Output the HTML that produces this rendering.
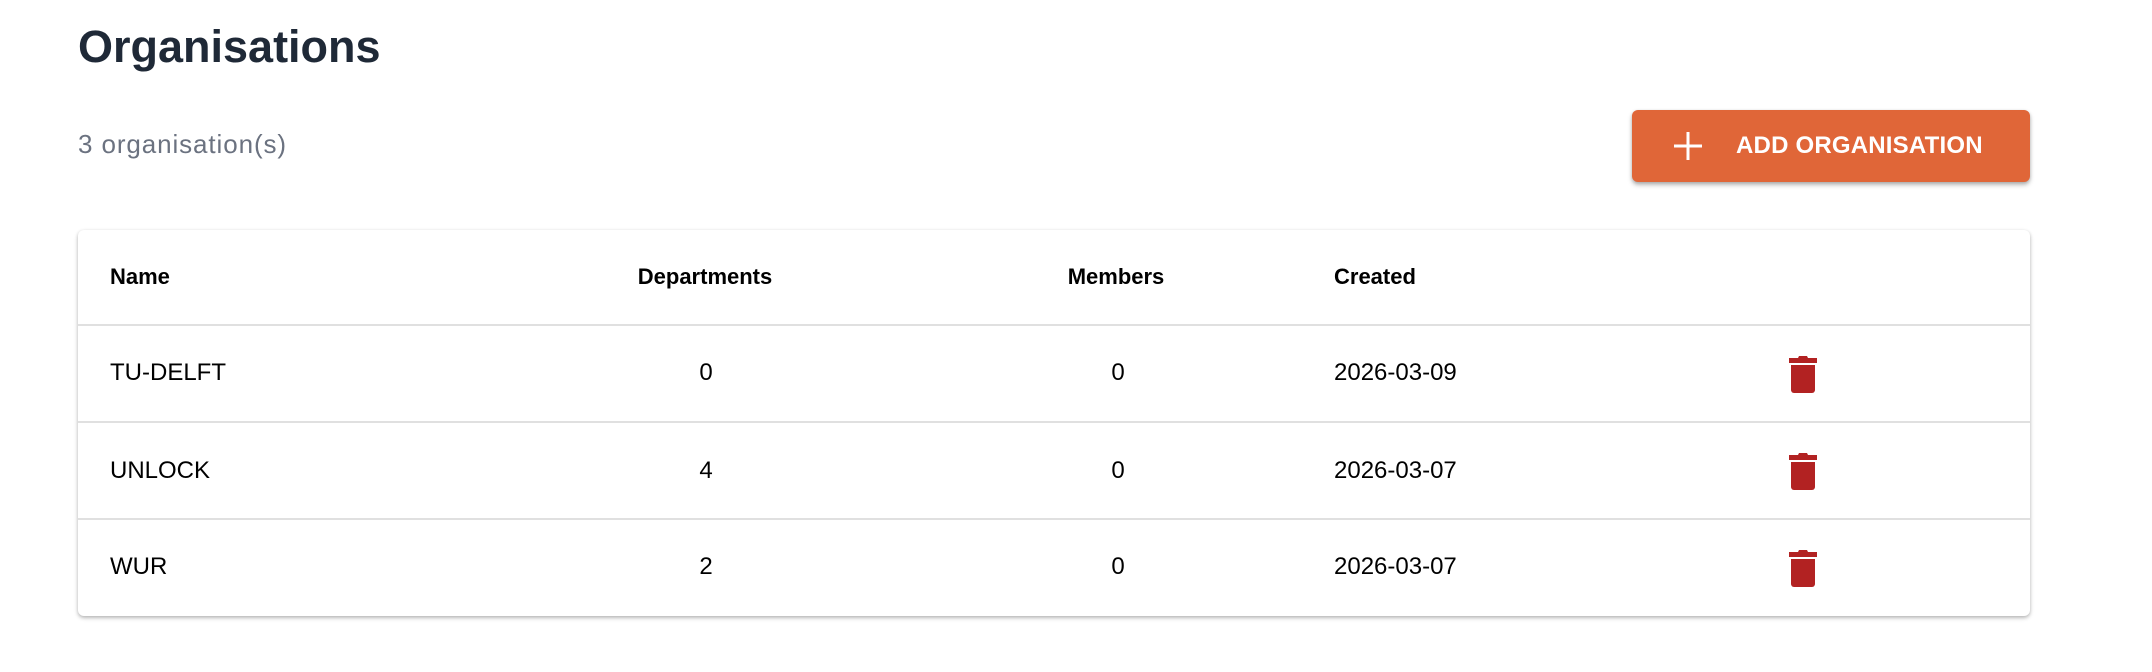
<!DOCTYPE html>
<html><head><meta charset="utf-8"><style>
*{margin:0;padding:0;box-sizing:border-box}
body{width:2152px;height:672px;background:#fff;font-family:"Liberation Sans",Arial,sans-serif;position:relative;overflow:hidden;color:#000}
.a{position:absolute;white-space:nowrap}
h1{position:absolute;left:78px;top:22px;font-size:45px;font-weight:bold;color:#1f2937;letter-spacing:0;line-height:50px}
.sub{left:78px;top:130px;font-size:26px;color:#6b7280;line-height:28px;letter-spacing:0.9px}
.btn{position:absolute;left:1632px;top:110px;width:398px;height:72px;background:#e06638;border-radius:6px;box-shadow:0 3px 5px rgba(0,0,0,.25),0 1px 3px rgba(0,0,0,.15);color:#fff}
.btn .t{position:absolute;left:104px;top:22px;font-size:24px;font-weight:bold;letter-spacing:0.2px;line-height:28px}
.card{position:absolute;left:78px;top:230px;width:1952px;height:386px;background:#fff;border-radius:6px;box-shadow:0 2px 4px rgba(0,0,0,.22),0 1px 3px rgba(0,0,0,.12)}
.ln{position:absolute;left:78px;width:1952px;height:2px;background:#e0e0e0}
.h{font-size:22px;font-weight:bold;line-height:26px}
.c{font-size:24px;line-height:28px}
.ctr{transform:translateX(-50%)}
.tr{position:absolute;left:1789px;width:28px}
</style></head><body>
<h1>Organisations</h1>
<div class="a sub">3 organisation(s)</div>
<div class="btn">
<svg style="position:absolute;left:41px;top:21px" width="30" height="30" viewBox="0 0 30 30"><path d="M15 1v28M1 15h28" stroke="#fff" stroke-width="3"/></svg>
<div class="t">ADD ORGANISATION</div>
</div>
<div class="card"></div>
<div class="ln" style="top:324px"></div>
<div class="ln" style="top:421px"></div>
<div class="ln" style="top:518px"></div>

<div class="a h" style="left:110px;top:264px">Name</div>
<div class="a h ctr" style="left:705px;top:264px">Departments</div>
<div class="a h ctr" style="left:1116px;top:264px">Members</div>
<div class="a h" style="left:1334px;top:264px">Created</div>

<div class="a c" style="left:110px;top:359px">TU-DELFT</div>
<div class="a c ctr" style="left:706px;top:359px">0</div>
<div class="a c ctr" style="left:1118px;top:359px">0</div>
<div class="a c" style="left:1334px;top:359px">2026-03-09</div>

<div class="a c" style="left:110px;top:457px">UNLOCK</div>
<div class="a c ctr" style="left:706px;top:457px">4</div>
<div class="a c ctr" style="left:1118px;top:457px">0</div>
<div class="a c" style="left:1334px;top:457px">2026-03-07</div>

<div class="a c" style="left:110px;top:553px">WUR</div>
<div class="a c ctr" style="left:706px;top:553px">2</div>
<div class="a c ctr" style="left:1118px;top:553px">0</div>
<div class="a c" style="left:1334px;top:553px">2026-03-07</div>

<svg class="tr" style="top:355px" width="28" height="38" viewBox="0 0 28 38"><path d="M10 1h8l1 2h9v5H0V3h9z" fill="#b22222"/><path d="M2 10h24v25a3 3 0 0 1-3 3H5a3 3 0 0 1-3-3z" fill="#b22222"/></svg>
<svg class="tr" style="top:452px" width="28" height="38" viewBox="0 0 28 38"><path d="M10 1h8l1 2h9v5H0V3h9z" fill="#b22222"/><path d="M2 10h24v25a3 3 0 0 1-3 3H5a3 3 0 0 1-3-3z" fill="#b22222"/></svg>
<svg class="tr" style="top:549px" width="28" height="38" viewBox="0 0 28 38"><path d="M10 1h8l1 2h9v5H0V3h9z" fill="#b22222"/><path d="M2 10h24v25a3 3 0 0 1-3 3H5a3 3 0 0 1-3-3z" fill="#b22222"/></svg>
</body></html>
